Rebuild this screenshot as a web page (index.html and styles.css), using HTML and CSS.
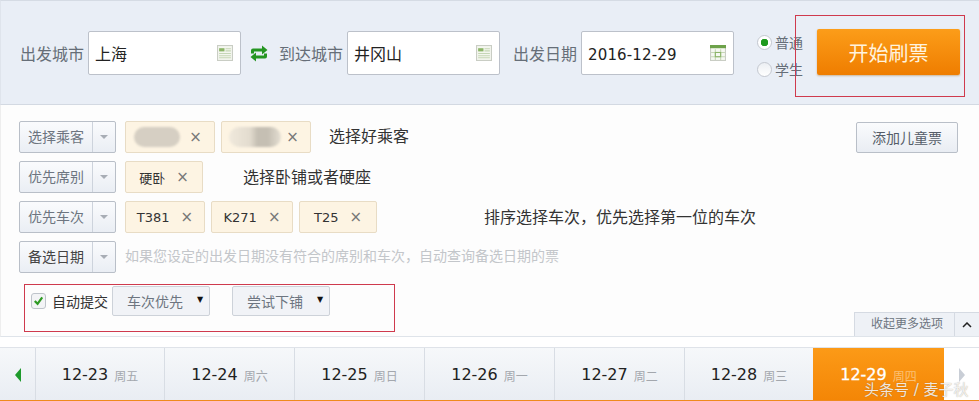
FILE: index.html
```html
<!DOCTYPE html>
<html lang="zh-CN">
<head>
    <meta charset="UTF-8">
    <title>开始刷票</title>
    <link rel="stylesheet" href="styles.css">
</head>
<body>
    <div class="page">
        <!-- query bar -->
        <header class="query-bar">
            <span class="field-label">出发城市</span>
            <div class="text-field">
                <span class="value">上海</span>
                <svg class="field-icon" viewBox="0 0 15 15"><rect x=".5" y=".5" width="14" height="14" fill="#f4f6ef" stroke="#c9cdc4"/><rect x="2" y="3" width="5" height="3" fill="#8cb568"/><path d="M8 3.5h5M8 5.5h5M2 8h11M2 10h11M2 12h11" stroke="#c5d6b5"/></svg>
            </div>
            <svg class="swap-icon" viewBox="0 0 18 17"><path d="M1 8.500V5.500Q1 3.500 3 3.500H12V.5L17.500 5 12 9.500V6.500H4V8.500ZM17 8.500V11.500Q17 13.500 15 13.500H6V16.500L.5 12 6 7.500V10.500H14V8.500Z" fill="#259522"/></svg>
            <span class="field-label">到达城市</span>
            <div class="text-field">
                <span class="value">井冈山</span>
                <svg class="field-icon" viewBox="0 0 15 15"><rect x=".5" y=".5" width="14" height="14" fill="#f4f6ef" stroke="#c9cdc4"/><rect x="2" y="3" width="5" height="3" fill="#8cb568"/><path d="M8 3.5h5M8 5.5h5M2 8h11M2 10h11M2 12h11" stroke="#c5d6b5"/></svg>
            </div>
            <span class="field-label date-label">出发日期</span>
            <div class="text-field">
                <span class="value date-value">2016-12-29</span>
                <svg class="field-icon" viewBox="0 0 15 15"><rect x=".5" y=".5" width="14" height="14" fill="#f6f8f2" stroke="#c9cdc4"/><rect width="15" height="3" fill="#6da24a"/><path d="M1 7h13M1 11h13M5 4v10M10 4v10" stroke="#c5d6b5"/><rect x="5" y="7" width="5" height="4" fill="none" stroke="#8cb568"/></svg>
            </div>
            <div class="ticket-types">
                <label class="radio-line"><span class="radio checked"></span>普通</label>
                <label class="radio-line"><span class="radio"></span>学生</label>
            </div>
            <button class="start-btn">开始刷票</button>
        </header>

        <!-- options -->
        <section class="options">
            <div class="option-row">
                <div class="picker"><span class="picker-text">选择乘客</span><span class="picker-arrow"></span></div>
                <span class="tag tag-a"><span class="blur-name"></span><span class="tag-x">×</span></span>
                <span class="tag tag-b"><span class="blur-name patch"></span><span class="tag-x">×</span></span>
                <span class="note note-a">选择好乘客</span>
                <button class="child-btn">添加儿童票</button>
            </div>
            <div class="option-row">
                <div class="picker"><span class="picker-text">优先席别</span><span class="picker-arrow"></span></div>
                <span class="tag tag-c">硬卧<span class="tag-x">×</span></span>
                <span class="note note-b">选择卧铺或者硬座</span>
            </div>
            <div class="option-row">
                <div class="picker"><span class="picker-text">优先车次</span><span class="picker-arrow"></span></div>
                <span class="tag tag-t1">T381<span class="tag-x">×</span></span>
                <span class="tag tag-t2">K271<span class="tag-x">×</span></span>
                <span class="tag tag-t3">T25<span class="tag-x">×</span></span>
                <span class="note note-c">排序选择车次&#65292;优先选择第一位的车次</span>
            </div>
            <div class="option-row">
                <div class="picker"><span class="picker-text dark">备选日期</span><span class="picker-arrow"></span></div>
                <span class="hint">如果您设定的出发日期没有符合的席别和车次&#65292;自动查询备选日期的票</span>
            </div>
            <div class="submit-row">
                <span class="checkbox"><svg viewBox="0 0 14 14"><path d="M3 7l3 3 5-7" fill="none" stroke="#2f9a24" stroke-width="2.400"/></svg></span>
                <span class="submit-label">自动提交</span>
                <div class="mini-select">车次优先<span class="mini-arrow">▼</span></div>
                <div class="mini-select second">尝试下铺<span class="mini-arrow">▼</span></div>
            </div>
            <div class="collapse-bar">
                <span class="collapse-text">收起更多选项</span>
                <span class="collapse-toggle"><svg viewBox="0 0 10 6"><path d="M1 5l4-4 4 4" fill="none" stroke="#222" stroke-width="1.500"/></svg></span>
            </div>
        </section>

        <!-- date strip -->
        <nav class="date-strip">
            <div class="strip-arrow prev"><span class="tri-left"></span></div>
            <div class="day first"><b>12-23</b><small>周五</small></div>
            <div class="day"><b>12-24</b><small>周六</small></div>
            <div class="day"><b>12-25</b><small>周日</small></div>
            <div class="day"><b>12-26</b><small>周一</small></div>
            <div class="day"><b>12-27</b><small>周二</small></div>
            <div class="day last"><b>12-28</b><small>周三</small></div>
            <div class="day active"><b>12-29</b><small>周四</small></div>
            <div class="strip-arrow next"><span class="tri-right"></span></div>
        </nav>

        <!-- red markup drawn over the screenshot -->
        <div class="mark mark-start"></div>
        <div class="mark mark-submit"></div>
        <div class="watermark">头条号 / 麦子秋</div>
    </div>
</body>
</html>
```

FILE: styles.css
```css
* {
    box-sizing: border-box;
}
html, body {
    margin: 0;
    padding: 0;
    background: #fff;
}
body {
    font-family: "DejaVu Sans", "Noto Sans CJK SC", sans-serif;
    color: #333;
    overflow: hidden;
}
.page {
    position: relative;
    width: 979px;
    height: 401px;
    overflow: hidden;
}

/* query bar */
.query-bar {
    display: flex;
    align-items: center;
    height: 105px;
    padding: 1px 0 0 20px;
    background: #e9eef6;
    border-top: 1px solid #d5dbe4;
    border-bottom: 1px solid #d3d9e2;
    border-left: 1px solid #dfe4ec;
}
.field-label {
    font-size: 16px;
    color: #666e78;
    width: 64px;
    margin-left: -1px;
    margin-right: 4px;
    white-space: nowrap;
}
.date-label {
    margin-left: 13px;
}
.text-field {
    display: flex;
    align-items: center;
    justify-content: space-between;
    width: 153px;
    height: 44px;
    padding: 0 6px;
    background: #fff;
    border: 1px solid #bcc1ca;
    border-radius: 2px;
}
.value {
    font-size: 16px;
    color: #222;
}
.date-value {
    margin-top: 3px;
    font-size: 15px;
    letter-spacing: .15px;
}
.field-icon {
    width: 16px;
    height: 16px;
    margin-right: 1px;
}
.swap-icon {
    width: 18px;
    height: 17px;
    margin: 0 12px 0 9px;
}
.ticket-types {
    display: flex;
    flex-direction: column;
    gap: 7px;
    margin-left: 23px;
    margin-top: 6px;
}
.radio-line {
    display: flex;
    align-items: center;
    gap: 3px;
    font-size: 14px;
    line-height: 20px;
    color: #666e78;
}
.radio {
    width: 15px;
    height: 15px;
    border: 1px solid #c4c8d0;
    border-radius: 50%;
    background: linear-gradient(#eceff3, #fff);
}
.radio.checked {
    background: radial-gradient(circle, #1f9a1f 0 3.5px, #fff 4px);
}
.start-btn {
    width: 143px;
    height: 46px;
    margin-left: 14px;
    margin-top: -2px;
    border: 0;
    border-radius: 2px;
    background: linear-gradient(#fc9d19, #ef7d00);
    box-shadow: 0 1px 2px rgba(160, 100, 20, .4);
    color: #fff3df;
    font-family: inherit;
    font-size: 20px;
}

/* options */
.options {
    position: relative;
    height: 232px;
    padding: 16px 0 0 19px;
    background: #fdfdfd;
    border-left: 1px solid #eee;
    border-bottom: 1px solid #dfe4ea;
}
.option-row {
    display: flex;
    align-items: center;
    height: 32px;
    margin-bottom: 8px;
    margin-left: -1px;
}
.picker {
    display: flex;
    align-items: center;
    width: 97px;
    height: 32px;
    border: 1px solid #b9bfc8;
    border-radius: 2px;
    background: linear-gradient(#fafbfd, #eaeef4);
}
.picker-text {
    flex: 1;
    text-align: center;
    font-size: 14px;
    color: #6d7580;
    border-right: 1px solid #cdd3dc;
    line-height: 30px;
}
.picker-text.dark {
    color: #444;
}
.picker-arrow {
    width: 0;
    height: 0;
    margin: 0 7px;
    border-left: 4px solid transparent;
    border-right: 4px solid transparent;
    border-top: 4px solid #a8adb5;
}
.tag {
    display: flex;
    align-items: center;
    justify-content: center;
    height: 32px;
    margin-left: 6px;
    background: #fdf4e3;
    border: 1px solid #e8dcc5;
    border-radius: 2px;
    font-size: 13px;
    color: #333;
}
.picker + .tag {
    margin-left: 9px;
}
.tag-a, .tag-b {
    width: 90px;
}
.tag-c {
    width: 78px;
}
.tag-t1 {
    width: 80px;
}
.tag-t2 {
    width: 82px;
}
.tag-t3 {
    width: 78px;
}
.tag-x {
    margin-left: 11px;
    font-size: 15px;
    color: #777;
}
.tag-a .tag-x {
    margin-left: 9px;
}
.tag-b .tag-x {
    margin-left: 5px;
}
.blur-name {
    width: 46px;
    height: 20px;
    margin-left: -4px;
    border-radius: 10px;
    background: #d6cfc3;
    filter: blur(1px);
}
.blur-name.patch {
    width: 52px;
    background: linear-gradient(90deg, #f0e9dc 0, #e3dccf 40%, #c5bfb3 55%, #c5bfb3 75%, #e5dfd3 100%);
}
.note {
    margin-top: -2px;
    font-size: 16px;
    color: #333;
    white-space: nowrap;
}
.note-a {
    margin-top: -4px;
    margin-left: 18px;
}
.note-b {
    margin-left: 40px;
}
.note-c {
    margin-left: 107px;
}
.child-btn {
    width: 102px;
    height: 31px;
    margin-left: auto;
    margin-right: 21px;
    border: 1px solid #b9bfc8;
    border-radius: 2px;
    background: linear-gradient(#fafbfd, #e9edf3);
    color: #555d68;
    font-family: inherit;
    font-size: 14px;
}
.hint {
    margin-left: 9px;
    margin-bottom: 4px;
    font-size: 14px;
    color: #c3c6ca;
    white-space: nowrap;
}
.submit-row {
    display: flex;
    align-items: center;
    height: 30px;
    margin: 13px 0 0 11px;
}
.checkbox {
    display: flex;
    width: 15px;
    height: 16px;
    border: 1px solid #bfc4cb;
    border-radius: 3px;
    background: #f3f4f6;
    margin-top: -1px;
}
.checkbox svg {
    width: 13px;
    height: 14px;
}
.submit-label {
    margin: -1px 4px 0 6px;
    font-size: 14px;
    color: #333;
    white-space: nowrap;
}
.mini-select {
    display: flex;
    align-items: center;
    width: 98px;
    height: 30px;
    padding-left: 14px;
    border: 1px solid #cdd2d9;
    border-radius: 2px;
    background: #f1f3f7;
    font-size: 14px;
    color: #6d7580;
    white-space: nowrap;
}
.mini-select.second {
    margin-left: 22px;
}
.mini-arrow {
    margin: -4px 0 0 14px;
    font-size: 8px;
    color: #111;
}
.collapse-bar {
    position: absolute;
    right: 0;
    bottom: 0;
    display: flex;
    height: 24px;
    background: #eef1f6;
    border-top: 1px solid #d5dae2;
    border-left: 1px solid #d5dae2;
}
.collapse-text {
    width: 100px;
    padding-left: 5px;
    font-size: 12px;
    line-height: 23px;
    text-align: center;
    color: #6d7580;
    border-right: 1px solid #d5dae2;
}
.collapse-toggle {
    display: flex;
    align-items: center;
    justify-content: center;
    width: 24px;
}
.collapse-toggle svg {
    width: 10px;
    height: 6px;
}

/* date strip */
.date-strip {
    display: flex;
    height: 54px;
    margin-top: 10px;
    border-top: 1px solid #dfe3e9;
    border-bottom: 1px solid #ef8a1d;
    background: linear-gradient(#f6f8fa, #e9edf3);
}
.strip-arrow {
    display: flex;
    align-items: center;
    justify-content: center;
    width: 36px;
    padding-top: 2px;
    border-right: 1px solid #d8dde4;
}
.strip-arrow.next {
    width: 35px;
    background: #fff;
    border-right: 0;
}
.tri-left {
    border-top: 7px solid transparent;
    border-bottom: 7px solid transparent;
    border-right: 6px solid #1e9a2c;
}
.tri-right {
    border-top: 7px solid transparent;
    border-bottom: 7px solid transparent;
    border-left: 6px solid #c9ced6;
}
.day {
    display: flex;
    align-items: center;
    justify-content: center;
    width: 130px;
    padding-top: 1px;
    border-right: 1px solid #d8dde4;
}
.day.first {
    width: 129px;
}
.day.last {
    width: 128px;
    border-right: 0;
}
.day b {
    font-size: 16px;
    font-weight: normal;
    color: #222;
}
.day small {
    margin-left: 6px;
    margin-top: 2px;
    font-size: 12px;
    color: #a3a7ad;
}
.day.active {
    width: 131px;
    border-right: 0;
    background: linear-gradient(#fc9a17, #f48606);
}
.day.active b {
    color: #fff;
    -webkit-text-stroke: .3px #fff;
}
.day.active small {
    color: #fbc074;
}

/* markup */
.mark {
    position: absolute;
    border: 1px solid #cf3a4d;
}
.mark-start {
    left: 795px;
    top: 15px;
    width: 170px;
    height: 82px;
}
.mark-submit {
    left: 24px;
    top: 284px;
    width: 371px;
    height: 48px;
}
.watermark {
    position: absolute;
    left: 864px;
    top: 378px;
    font-size: 15px;
    color: rgba(255, 255, 255, .85);
    text-shadow: 0 0 1px rgba(90, 70, 50, .55);
    white-space: nowrap;
}
```
